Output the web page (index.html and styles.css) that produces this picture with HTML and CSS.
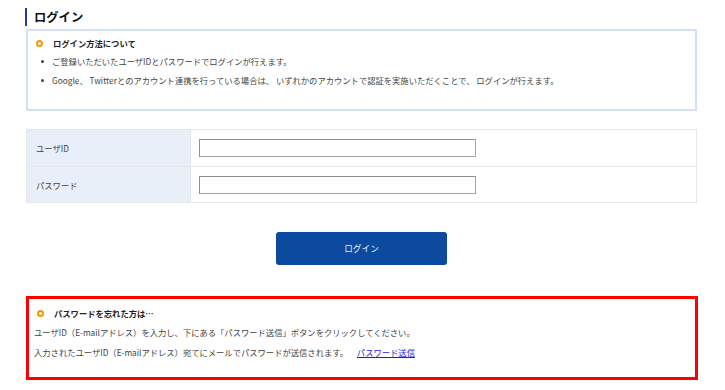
FILE: index.html
```html
<!DOCTYPE html>
<html lang="ja">
<head>
<meta charset="utf-8">
<title>ログイン</title>
<link rel="stylesheet" href="styles.css">
</head>
<body>
<div class="page">
  <h1 class="heading">ログイン</h1>

  <section class="info-box">
    <h2 class="box-title"><span class="ring"></span>ログイン方法について</h2>
    <ul class="info-list">
      <li>ご登録いただいたユーザIDとパスワードでログインが行えます。</li>
      <li>Google、 Twitterとのアカウント連携を行っている場合は、 いずれかのアカウントで認証を実施いただくことで、 ログインが行えます。</li>
    </ul>
  </section>

  <div class="form-table">
    <div class="row">
      <div class="label">ユーザID</div>
      <div class="field"><input class="text-input" type="text"></div>
    </div>
    <div class="row">
      <div class="label">パスワード</div>
      <div class="field"><input class="text-input" type="password"></div>
    </div>
  </div>

  <div class="button-wrap">
    <button class="login-button" type="button">ログイン</button>
  </div>

  <section class="forgot-box">
    <h2 class="box-title forgot-title"><span class="ring"></span>パスワードを忘れた方は…</h2>
    <p class="forgot-text">ユーザID（E-mailアドレス）を入力し、下にある「パスワード送信」ボタンをクリックしてください。</p>
    <p class="forgot-text">入力されたユーザID（E-mailアドレス）宛てにメールでパスワードが送信されます。 <a class="send-link" href="#">パスワード送信</a></p>
  </section>
</div>
</body>
</html>
```

FILE: styles.css
```css
html, body {
  margin: 0;
  padding: 0;
  background: #ffffff;
}

body {
  font-family: "Noto Sans CJK JP", "Noto Sans", sans-serif;
  color: #3a3a3a;
  font-size: 8px;
}

.page {
  width: 671px;
  margin-left: 26px;
  padding-top: 8px;
}

.heading {
  margin: 0 0 0 -1px;
  height: 18px;
  line-height: 18px;
  font-size: 12.3px;
  font-weight: bold;
  color: #111;
  border-left: 2px solid #1e3f93;
  padding-left: 7px;
}

.info-box {
  margin-top: 3px;
  border: 2px solid #d3e1f5;
  padding: 6px 0 19px 0;
}

.box-title {
  margin: 0;
  display: flex;
  align-items: center;
  font-size: 8.3px;
  font-weight: bold;
  color: #222;
  line-height: 12px;
  padding-left: 8px;
}

.ring {
  width: 3px;
  height: 3px;
  border: 2px solid #f39800;
  border-radius: 50%;
  margin-right: 10px;
  flex: none;
}

.info-list {
  list-style: none;
  margin: 3px 0 0 0;
  padding: 0 0 0 24px;
}

.info-list li {
  position: relative;
  line-height: 19px;
  font-size: 8.3px;
  color: #444;
}

.info-list li::before {
  content: "";
  position: absolute;
  left: -11px;
  top: 8px;
  width: 3px;
  height: 3px;
  border-radius: 50%;
  background: #444;
}

.form-table {
  margin-top: 18px;
  border: 1px solid #e6e6e6;
}

.row {
  display: grid;
  grid-template-columns: 164px 1fr;
  height: 36px;
}

.row + .row {
  border-top: 1px solid #e6e6e6;
  height: 35px;
}

.label {
  background: #e9eff8;
  border-right: 1px solid #e3e6ea;
  display: flex;
  align-items: center;
  padding-left: 9px;
  font-size: 8.3px;
  color: #444;
}

.field {
  display: flex;
  align-items: center;
  padding-left: 8px;
}

.text-input {
  width: 277px;
  height: 18px;
  box-sizing: border-box;
  border: 1px solid #a6a6a6;
  border-top-color: #8f8f8f;
  border-left-color: #8f8f8f;
  background: #fff;
  margin: 0;
  padding: 0;
}

.button-wrap {
  display: flex;
  justify-content: center;
  margin-top: 29px;
}

.login-button {
  width: 171px;
  height: 33px;
  border: none;
  border-radius: 3px;
  background: #0b4a9f;
  color: #e8eef8;
  font-family: "Noto Sans CJK JP", "Noto Sans", sans-serif;
  font-size: 8.7px;
  padding: 0;
}

.forgot-box {
  margin-top: 31px;
  width: 672px;
  box-sizing: border-box;
  height: 84px;
  border: 3px solid #ff0000;
  padding: 8px 0 0 5px;
}

.forgot-title {
  padding-left: 3px;
}

.forgot-text {
  margin: 0;
  line-height: 20px;
  font-size: 8.3px;
  color: #444;
}

.forgot-title + .forgot-text {
  margin-top: 3px;
}

.send-link {
  color: #1a1aee;
  text-decoration: underline;
  margin-left: 7px;
}
```
